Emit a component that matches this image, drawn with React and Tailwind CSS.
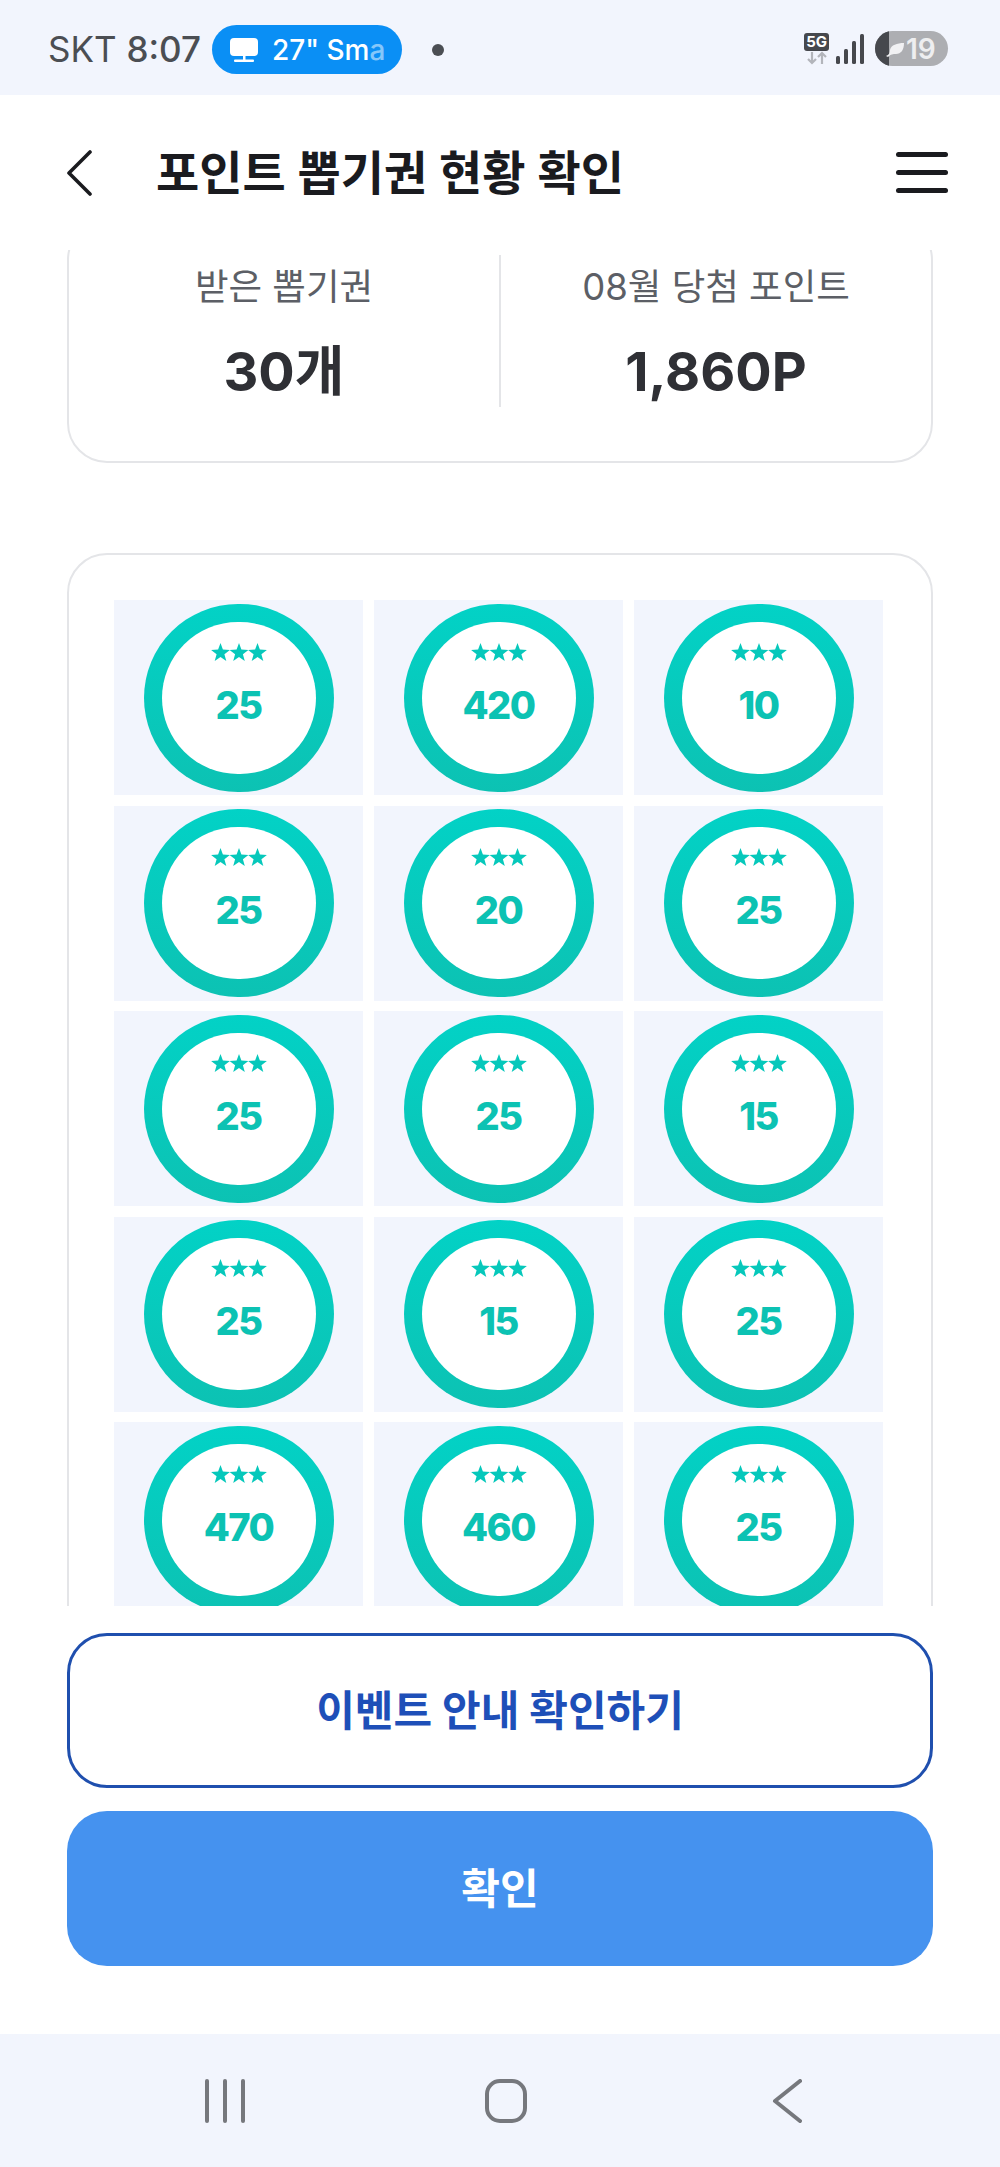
const POINTS = [25, 420, 10, 25, 20, 25, 25, 25, 15, 25, 15, 25, 470, 460, 25];

function Ticket({ value }) {
  return (
    <div className="flex h-[195px] items-center justify-center bg-[#f2f5fd]">
      <div className="flex h-[188px] w-[190px] items-center justify-center rounded-full bg-linear-to-b from-[#02d2c6] to-[#0cc2b3]">
        <div className="flex h-[152px] w-[154px] flex-col items-center rounded-full bg-white pt-[21px]">
          <svg width="56" height="19" viewBox="0 0 56 19" fill="#06c8bb">
            <path d="M9.5 0l2.4 6.6 7 .3-5.5 4.3 1.9 6.8-5.8-3.9-5.8 3.9 1.9-6.8L.1 6.9l7-.3z" />
            <path d="M28 0l2.4 6.6 7 .3-5.5 4.3 1.9 6.8-5.8-3.9-5.8 3.9 1.9-6.8-5.5-4.3 7-.3z" />
            <path d="M46.5 0l2.4 6.6 7 .3-5.5 4.3 1.9 6.8-5.8-3.9-5.8 3.9 1.9-6.8-5.5-4.3 7-.3z" />
          </svg>
          <p className="mt-[20px] text-[38px] leading-[46px] font-extrabold tracking-[-1.5px] text-[#0cc2b3]">{value}</p>
        </div>
      </div>
    </div>
  );
}

function StatusBar() {
  return (
    <div className="flex h-[95px] items-center justify-between bg-[#f2f5fd] pt-[4px] pr-[52px] pl-[48px]">
      <div className="flex items-center">
        <span className="text-[35px] leading-none text-[#4b4e53]">
          SKT <span className="font-medium">8:07</span>
        </span>
        <div className="ml-[11px] flex h-[49px] w-[190px] items-center gap-[14px] rounded-full bg-[#0a8ff5] pl-[18px]">
          <svg width="28" height="24" viewBox="0 0 28 24" fill="white">
            <rect x="0" y="0" width="28" height="18" rx="4" />
            <rect x="13" y="17" width="2.5" height="5" />
            <rect x="4" y="21.5" width="20" height="2.5" rx="1" />
          </svg>
          <span className="text-[28px] leading-none font-medium text-white">
            27" Sm<span className="opacity-50">a</span>
          </span>
        </div>
        <span className="ml-[30px] size-[12px] rounded-full bg-[#4b4e53]" />
      </div>
      <div className="-mt-[2px] flex items-center">
        <div className="flex flex-col items-center">
          <span className="rounded-[3px] bg-[#46484d] px-[2px] text-[15px] leading-[18px] font-bold text-white">5G</span>
          <svg width="22" height="14" viewBox="0 0 22 14" fill="none" stroke="#b3b5bb" strokeWidth="2.2">
            <path d="M6 1v11M2 8l4 4 4-4M16 13V2M12 6l4-4 4 4" />
          </svg>
        </div>
        <svg className="ml-[6px]" width="30" height="32" viewBox="0 0 30 32" fill="#46484d">
          <rect x="1" y="23" width="4" height="8" rx="1.5" />
          <rect x="9" y="16" width="4" height="15" rx="1.5" />
          <rect x="17" y="8" width="4" height="23" rx="1.5" />
          <rect x="25" y="1" width="4" height="30" rx="1.5" />
        </svg>
        <div className="ml-[10px] flex h-[35px] w-[73px] items-center overflow-hidden rounded-full bg-[#adaeb2]">
          <div className="h-full w-[14px] bg-[#46484d]" />
          <svg className="-ml-[4px]" width="20" height="18" viewBox="0 0 20 18" fill="#f1f1f3">
            <path d="M1 16C4 15 5 13 5 10 6 5 12 3 19 3c0 7-3 11-8 11-3 0-5 0-8 3z" />
          </svg>
          <span className="ml-[1px] text-[28px] leading-none font-semibold text-[#eeeef0]">19</span>
        </div>
      </div>
    </div>
  );
}

function Header() {
  return (
    <div className="flex h-[155px] items-center justify-between pr-[52px] pl-[66px]">
      <div className="flex items-center gap-[64px]">
        <svg width="26" height="46" viewBox="0 0 26 46" fill="none" stroke="#1a1b1f" strokeWidth="3.6" strokeLinecap="round" strokeLinejoin="round">
          <path d="M24 2 3 23l21 21" />
        </svg>
        <h1 className="text-[47px] leading-none font-semibold text-[#1a1b1f]">포인트 뽑기권 현황 확인</h1>
      </div>
      <div className="flex w-[52px] flex-col gap-[13px]">
        <span className="h-[5px] rounded-full bg-[#1a1b1f]" />
        <span className="h-[5px] rounded-full bg-[#1a1b1f]" />
        <span className="h-[5px] rounded-full bg-[#1a1b1f]" />
      </div>
    </div>
  );
}

export default function App() {
  return (
    <div className="flex h-[2167px] w-[1000px] flex-col overflow-hidden bg-white font-['Inter','Noto_Sans_CJK_KR',sans-serif]">
      <StatusBar />
      <Header />

      <div className="h-[1356px] overflow-hidden px-[67px]">
        <div className="-mt-[30px] flex h-[243px] rounded-[40px] border-2 border-[#e4e5e8] pt-[33px]">
          <div className="flex h-[152px] flex-1 flex-col items-center border-r-2 border-[#e4e5e8] pt-[10px]">
            <p className="text-[36.5px] leading-[44px] text-[#5c5f66]">받은 뽑기권</p>
            <p className="mt-[33px] text-[54px] leading-[60px] font-bold text-[#2f3035]">30개</p>
          </div>
          <div className="flex h-[152px] flex-1 flex-col items-center pt-[10px]">
            <p className="text-[36.5px] leading-[44px] text-[#5c5f66]">08월 당첨 포인트</p>
            <p className="mt-[33px] text-[54px] leading-[60px] font-bold text-[#2f3035]">1,860P</p>
          </div>
        </div>

        <div className="mt-[90px] rounded-t-[40px] border-2 border-[#e4e5e8] pt-[45px] pr-[48px] pl-[45px]">
          <div className="grid grid-cols-3 gap-x-[11px] gap-y-[10.5px]">
            {POINTS.map((p, i) => (
              <Ticket key={i} value={p} />
            ))}
          </div>
        </div>
      </div>

      <div className="flex flex-col gap-[23px] px-[67px] pt-[27px]">
        <button className="h-[155px] rounded-[40px] border-[3px] border-[#1f4fae] text-[42px] font-bold text-[#1e4fb8]">
          이벤트 안내 확인하기
        </button>
        <button className="h-[155px] rounded-[40px] bg-[#4592ef] text-[42px] font-bold text-white">확인</button>
      </div>

      <div className="mt-[68px] flex h-[133px] flex-1 items-center justify-between bg-[#f2f5fd] pr-[198px] pl-[205px]">
        <div className="flex gap-[14px]">
          <span className="h-[44px] w-[4px] rounded-full bg-[#76787d]" />
          <span className="h-[44px] w-[4px] rounded-full bg-[#76787d]" />
          <span className="h-[44px] w-[4px] rounded-full bg-[#76787d]" />
        </div>
        <span className="-ml-[5px] h-[44px] w-[42px] rounded-[15px] border-[4px] border-[#76787d]" />
        <svg width="30" height="44" viewBox="0 0 30 44" fill="none" stroke="#76787d" strokeWidth="4" strokeLinecap="round" strokeLinejoin="round">
          <path d="M28 2 3 22l25 20" />
        </svg>
      </div>
    </div>
  );
}
